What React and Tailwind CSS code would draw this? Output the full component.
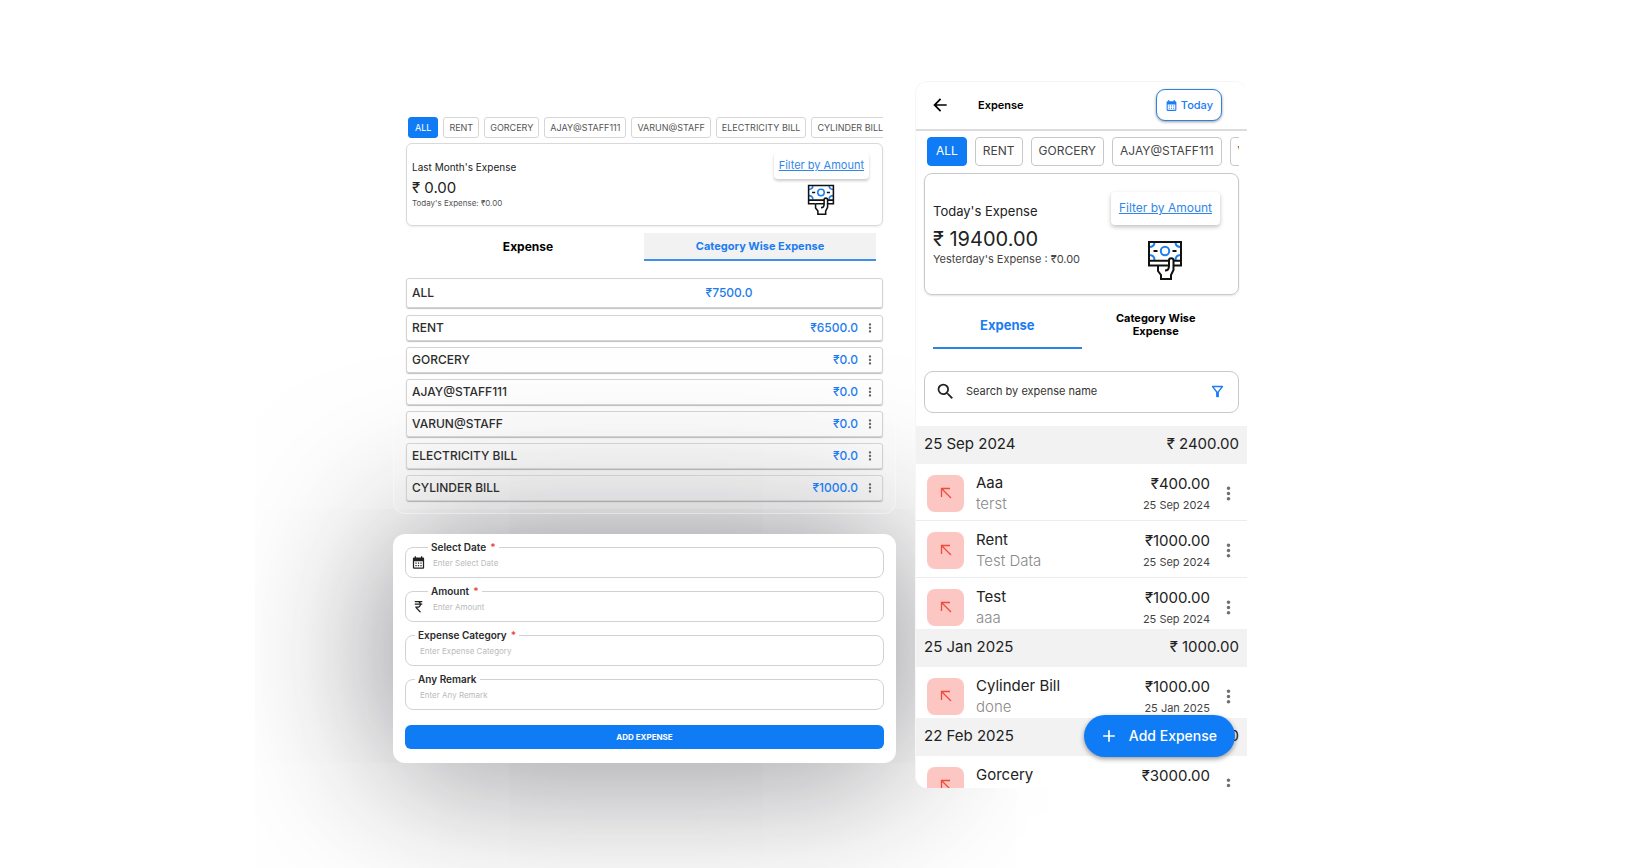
import { MdAdd, MdArrowBack, MdCalendarMonth, MdCurrencyRupee, MdMoreVert, MdOutlineFilterAlt, MdSearch } from "react-icons/md";

const categories = ["ALL", "RENT", "GORCERY", "AJAY@STAFF111", "VARUN@STAFF", "ELECTRICITY BILL", "CYLINDER BILL"];

const totals = [
  { name: "RENT", amount: "₹6500.0" },
  { name: "GORCERY", amount: "₹0.0" },
  { name: "AJAY@STAFF111", amount: "₹0.0" },
  { name: "VARUN@STAFF", amount: "₹0.0" },
  { name: "ELECTRICITY BILL", amount: "₹0.0" },
  { name: "CYLINDER BILL", amount: "₹1000.0" },
];

const days = [
  {
    date: "25 Sep 2024",
    total: "₹ 2400.00",
    items: [
      { name: "Aaa", note: "terst", amount: "₹400.00" },
      { name: "Rent", note: "Test Data", amount: "₹1000.00" },
      { name: "Test", note: "aaa", amount: "₹1000.00" },
    ],
  },
  { date: "25 Jan 2025", total: "₹ 1000.00", items: [{ name: "Cylinder Bill", note: "done", amount: "₹1000.00" }] },
  { date: "22 Feb 2025", total: "₹ 3000.00", items: [{ name: "Gorcery", note: "", amount: "₹3000.00" }] },
];

const fields = [
  { id: "date", label: "Select Date", required: true, icon: MdCalendarMonth },
  { id: "amount", label: "Amount", required: true, icon: MdCurrencyRupee },
  { id: "category", label: "Expense Category", required: true },
  { id: "remark", label: "Any Remark", required: false },
];

function CashIcon({ className }) {
  return (
    <svg viewBox="0 0 36 40" fill="none" strokeWidth="2" className={className} aria-hidden="true">
      <g stroke="#1c80f0">
        <circle cx="18" cy="11" r="4.2" />
        <path d="M7.5 2c0 3-2 5-5.500 5M28.500 2c0 3 2 5 5.500 5M2 15c3.500 0 5.500 2 5.500 5M34 15c-3.500 0-5.500 2-5.500 5" />
      </g>
      <path d="M22 20.800H2V2h32v18.800h-7M2 20v5.500h9M27 25.500h7V20M2 20.800h20M6.500 11h4M25.500 11h4" stroke="#111" />
      <path d="M11 25.500v5.500l3 4v4h10v-4l2.500-5V20.500c0-3-4.500-3-4.500 0V26c0 2.500-1.500 4.500-4 4.500M11 25.500h10.500" stroke="#111" />
    </svg>
  );
}

function MoreButton({ label, className }) {
  return (
    <button type="button" aria-label={`More options for ${label}`} className={className}>
      <MdMoreVert />
    </button>
  );
}

function CategoryPanel() {
  return (
    <section className="relative z-10 rounded-xl border border-[#fcfcfc]/40 bg-white/10 px-3 pt-[11px] pb-3">
      <div className="flex gap-[5px] overflow-hidden pl-[2px]">
        {categories.map((name, i) => (
          <button
            key={name}
            type="button"
            className={
              i === 0
                ? "h-[21px] shrink-0 rounded-[3px] border border-[#0f7cf6] bg-[#0f7cf6] px-[6px] text-[9px] text-white"
                : "h-[21px] shrink-0 rounded-[3px] border border-[#d6d6d6] bg-white px-[5px] text-[9px] text-[#555]"
            }
          >
            {name}
          </button>
        ))}
      </div>

      <div className="mt-[5px] flex h-[83px] items-start justify-between rounded-md border border-[#d9d9d9] pt-2 pr-[13px] pl-[5px] shadow-[0_1px_2px_rgba(0,0,0,0.08)]">
        <div className="pt-2 text-[#222]">
          <p className="text-[10px] leading-[14px]">Last Month&#39;s Expense</p>
          <p className="mt-[5px] text-[15px] leading-[18px]">₹ 0.00</p>
          <p className="text-[8px] leading-3 text-[#555]">Today&#39;s Expense: ₹0.00</p>
        </div>
        <div className="flex flex-col items-center gap-[5px]">
          <button type="button" className="h-[27px] rounded bg-white px-[5px] text-[11px] text-[#3187e8] underline shadow-[0_2px_3px_rgba(0,0,0,0.2)]">
            Filter by Amount
          </button>
          <CashIcon className="h-[31px] w-7" />
        </div>
      </div>

      <div className="mt-[7px] flex h-7 pr-[7px] pl-[6px] font-bold">
        <button type="button" className="flex-1 text-[12px] text-black">Expense</button>
        <button type="button" className="flex-1 border-b-2 border-[#3d8fea] bg-[#f2f2f2] text-[11px] text-[#1c7cf0]">
          Category Wise Expense
        </button>
      </div>

      <ul className="mt-[17px] flex flex-col gap-[6px] text-[12px] font-medium text-[#2d2d2d]">
        <li className="mb-px flex h-[30px] items-center rounded-[3px] border border-[#c8c8c8]/80 px-[5px] shadow-[0_1px_1px_rgba(0,0,0,0.25)]">
          <span className="flex-[4]">ALL</span>
          <span className="flex-[7] text-center text-[#1c7cf0]">₹7500.0</span>
        </li>
        {totals.map((row) => (
          <li key={row.name} className="flex h-[26px] items-center rounded-[3px] border border-[#c8c8c8]/80 px-[5px] shadow-[0_1px_1px_rgba(0,0,0,0.25)]">
            <span className="flex-1">{row.name}</span>
            <span className="text-[#1c7cf0]">{row.amount}</span>
            <MoreButton label={row.name} className="ml-[5px] text-[14px] text-[#666]" />
          </li>
        ))}
      </ul>
    </section>
  );
}

function ExpenseForm() {
  return (
    <form className="rounded-xl bg-white px-3 pt-[13px] pb-[14px] shadow-[0_4px_160px_rgba(20,20,30,0.55)]">
      <div className="flex flex-col gap-[13px]">
        {fields.map(({ id, label, required, icon: Icon }) => (
          <div key={id} className="relative flex h-[31px] items-center rounded-lg border border-[#d2d2d2]">
            <label
              htmlFor={id}
              className={
                Icon
                  ? "absolute -top-[7px] left-[22px] bg-white px-[3px] text-[10px] leading-3 font-semibold text-[#2b2b2b]"
                  : "absolute -top-[7px] left-[9px] bg-white px-[3px] text-[10px] leading-3 font-semibold text-[#2b2b2b]"
              }
            >
              {label}
              {required && <span className="pl-1 text-[#f04438]">*</span>}
            </label>
            {Icon && <Icon className="ml-[5px] shrink-0 text-[15px] text-[#222]" />}
            <input
              id={id}
              placeholder={`Enter ${label}`}
              className={
                Icon
                  ? "min-w-0 flex-1 bg-transparent pl-[7px] text-[8px] outline-none placeholder:text-[#bbb]"
                  : "min-w-0 flex-1 bg-transparent pl-[14px] text-[8px] outline-none placeholder:text-[#bbb]"
              }
            />
          </div>
        ))}
      </div>
      <button type="submit" className="mt-[15px] h-6 w-full rounded-md bg-[#0f7cf6] text-[8px] font-bold text-white">
        ADD EXPENSE
      </button>
    </form>
  );
}

function PhonePanel() {
  return (
    <section className="relative h-[707px] w-full max-w-[332px] overflow-hidden rounded-xl border-t border-l border-[#f6f6f6] bg-white text-[#222]">
      <header className="flex h-[49px] items-center border-b-2 border-[#dcdcdc] pr-[25px] pl-[14px]">
        <button type="button" aria-label="Back" className="text-[20px] text-black">
          <MdArrowBack />
        </button>
        <h1 className="flex-1 pl-7 text-[11px] font-semibold text-black">Expense</h1>
        <button type="button" className="flex h-8 items-center gap-[3px] rounded-[9px] border border-[#2b83e8] bg-white px-2 text-[11px] font-medium text-[#1c7cf0] shadow-[0_1px_3px_rgba(0,0,0,0.4)]">
          <MdCalendarMonth className="text-[13px]" />
          Today
        </button>
      </header>

      <div className="mt-[6px] mr-2 ml-[11px] flex gap-2 overflow-hidden">
        {categories.slice(0, 5).map((name, i) => (
          <button
            key={name}
            type="button"
            className={
              i === 0
                ? "h-[29px] shrink-0 rounded border border-[#0f7cf6] bg-[#0f7cf6] px-2 text-[12px] text-white"
                : "h-[29px] shrink-0 rounded border border-[#c8c8c8] bg-white px-[7px] text-[12px] text-[#444]"
            }
          >
            {name}
          </button>
        ))}
      </div>

      <div className="mx-2 mt-[7px] flex h-[122px] items-start justify-between rounded-lg border border-[#cacaca] pt-[18px] pr-[18px] pl-2 shadow-[0_1px_2px_rgba(0,0,0,0.12)]">
        <div className="pt-[11px]">
          <p className="text-[13px] leading-4">Today&#39;s Expense</p>
          <p className="mt-2 text-[20px] leading-6">₹ 19400.00</p>
          <p className="text-[11px] leading-4 text-[#444]">Yesterday&#39;s Expense : ₹0.00</p>
        </div>
        <div className="flex flex-col items-center gap-[15px]">
          <button type="button" className="h-[33px] rounded bg-white px-2 text-[12px] text-[#3187e8] underline shadow-[0_2px_4px_rgba(0,0,0,0.25)]">
            Filter by Amount
          </button>
          <CashIcon className="h-10 w-9" />
        </div>
      </div>

      <div className="mx-[17px] mt-[7px] flex h-[47px] font-bold">
        <button type="button" className="flex-1 border-b-2 border-[#2b83e8] pt-1 text-[13px] text-[#1c7cf0]">Expense</button>
        <button type="button" className="flex-1 text-[11px] leading-[13px] text-black">
          <span className="block px-8">Category Wise Expense</span>
        </button>
      </div>

      <div className="mx-2 mt-[22px] flex h-[42px] items-center rounded-[9px] border border-[#c8c8c8] pr-3 pl-[10px]">
        <MdSearch className="shrink-0 text-[21px] text-[#222]" />
        <input aria-label="Search by expense name" placeholder="Search by expense name" className="min-w-0 flex-1 pl-[10px] text-[11px] outline-none placeholder:text-[#333]" />
        <button type="button" aria-label="Filter" className="text-[17px] text-[#1c7cf0]">
          <MdOutlineFilterAlt />
        </button>
      </div>

      <div className="mt-[13px]">
        {days.map((day) => (
          <div key={day.date}>
            <h2 className="flex h-[38px] items-center justify-between bg-[#f2f2f2] px-2 text-[15px]">
              <span>{day.date}</span>
              <span>{day.total}</span>
            </h2>
            <ul className="divide-y divide-[#ececec]">
              {day.items.map((item) => (
                <li key={item.name} className="flex items-start pt-[11px] pb-2 pl-[11px] last:pb-[3px]">
                  <span className="flex size-[37px] shrink-0 items-center justify-center rounded-lg bg-[#fcc6c3]">
                    <svg viewBox="0 0 12 12" className="size-3" fill="none" stroke="#f04a3e" strokeWidth="1.300" aria-hidden="true">
                      <path d="M1.500 10V1.500H10M1.500 1.500l9.500 9.500" />
                    </svg>
                  </span>
                  <div className="-mt-[2px] flex-1 pl-3 text-[15px] leading-5">
                    <p>{item.name}</p>
                    <p className="mt-px h-[18px] font-light text-[#8a8a8a]">{item.note}</p>
                  </div>
                  <div className="-mt-px text-right">
                    <p className="text-[15px] leading-5">{item.amount}</p>
                    <p className="mt-[5px] text-[11px] leading-3 text-[#444]">{day.date}</p>
                  </div>
                  <MoreButton label={item.name} className="mt-2 mr-2 ml-2 text-[21px] text-[#707070]" />
                </li>
              ))}
            </ul>
          </div>
        ))}
      </div>

      <button type="button" className="absolute right-3 bottom-[31px] flex h-[42px] items-center gap-[10px] rounded-full bg-[#0f7cf6] pr-[18px] pl-[15px] text-[14px] font-medium text-white shadow-[0_2px_5px_rgba(0,0,0,0.4)]">
        <MdAdd className="text-[20px]" />
        Add Expense
      </button>
    </section>
  );
}

export default function App() {
  return (
    <main className="flex min-h-screen items-center justify-center gap-[19px] overflow-hidden bg-white font-['Inter','Liberation_Sans',sans-serif]">
      <div className="flex w-full max-w-[503px] flex-col gap-5">
        <CategoryPanel />
        <ExpenseForm />
      </div>
      <PhonePanel />
    </main>
  );
}
